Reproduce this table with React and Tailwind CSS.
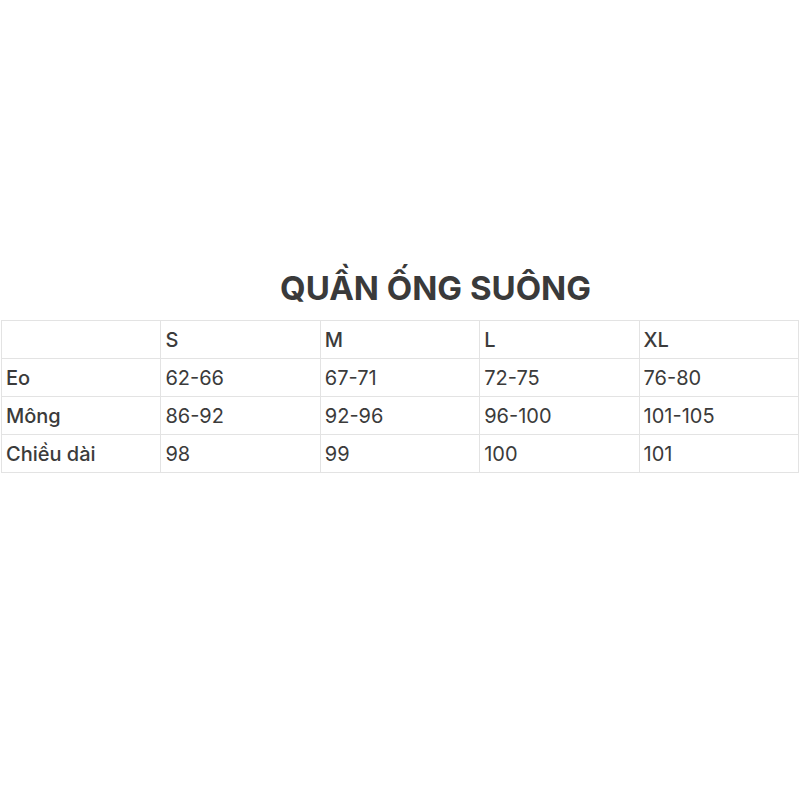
const sizes = ["S", "M", "L", "XL"];

const rows = [
  { label: "Eo", values: ["62-66", "67-71", "72-75", "76-80"] },
  { label: "Mông", values: ["86-92", "92-96", "96-100", "101-105"] },
  { label: "Chiều dài", values: ["98", "99", "100", "101"] },
];

const cell = "h-[38px] border border-[#e3e3e3] px-[4px] text-left align-middle";

const App = () => {
  return (
    <div className="w-[800px] h-[800px] bg-white text-[#3b3b3b] font-['Inter',sans-serif]">
      <div className="pt-[266px] pl-[280px]">
        <h1 className="text-[33px] leading-[44px] font-bold text-[#3a3a3a]">QUẦN ỐNG SUÔNG</h1>
      </div>
      <div className="mt-[10px] pl-[1px]">
        <table className="w-[798px] border-collapse table-fixed text-[20px]">
          <thead>
            <tr>
              <th className={cell}></th>
              {sizes.map((s) => (
                <th key={s} className={`${cell} font-medium`}>
                  {s}
                </th>
              ))}
            </tr>
          </thead>
          <tbody>
            {rows.map((r) => (
              <tr key={r.label}>
                <td className={`${cell} font-medium`}>{r.label}</td>
                {r.values.map((v, i) => (
                  <td key={i} className={`${cell} font-normal`}>
                    {v}
                  </td>
                ))}
              </tr>
            ))}
          </tbody>
        </table>
      </div>
    </div>
  );
};

export default App;
